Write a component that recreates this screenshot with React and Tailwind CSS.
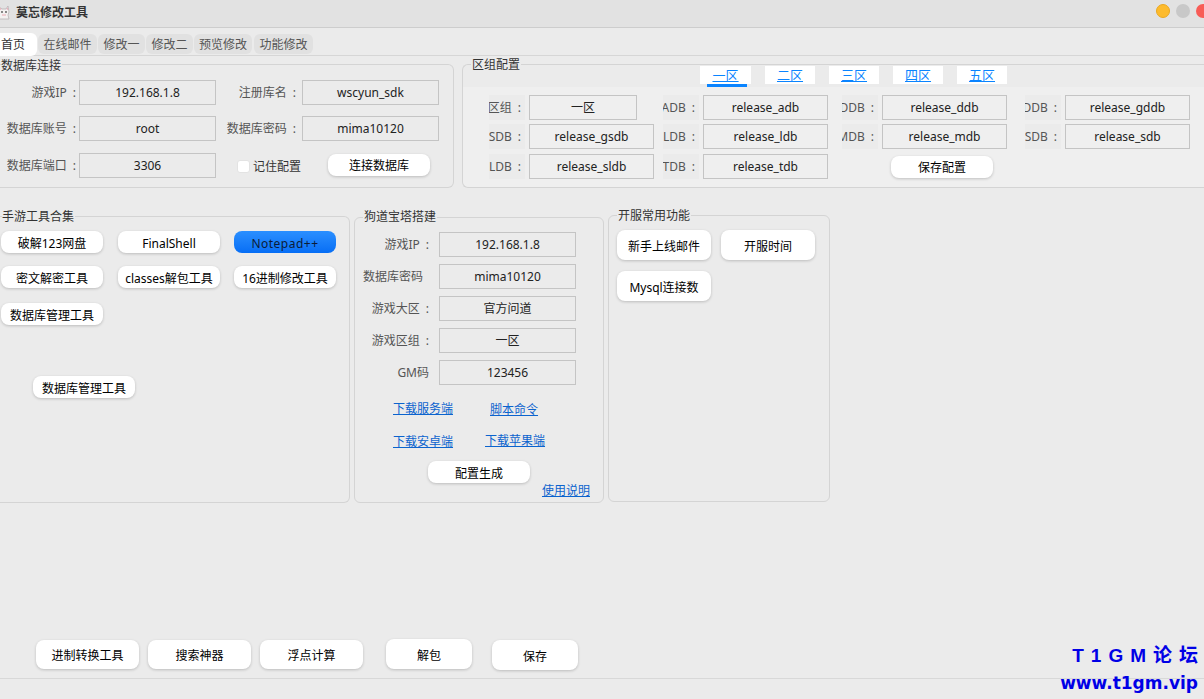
import React from 'react';

const Field = ({ label, value, labelW = 'w-[76px] mr-[3px]', inputW = 'w-[137px]', labelCls = '' }) => (
  <div className="flex items-center">
    <div className={`${labelW} ${labelCls} shrink-0 flex justify-end overflow-hidden whitespace-pre text-[#555]`}>{label}</div>
    <div className={`${inputW} h-[25px] shrink-0 flex items-center justify-center border border-[#c4c4c4] text-[#222]`}>{value}</div>
  </div>
);

const Btn = ({ children, cls = 'w-[102px] h-[22px]', pad = 'pt-[4px]' }) => (
  <button className={`${cls} ${pad} shrink-0 flex items-center justify-center rounded-lg bg-white text-black shadow-[0_1px_3px_rgba(0,0,0,0.2)]`}>
    {children}
  </button>
);

const Title = ({ children, cls }) => (
  <div className={`absolute bg-[#ebebeb] text-[#333] leading-[14px] whitespace-nowrap ${cls}`}>{children}</div>
);

const Link = ({ children, cls = '' }) => (
  <a className={`text-[#0b63ce] underline whitespace-nowrap ${cls}`}>{children}</a>
);

const CatIcon = () => (
  <svg width="11" height="16" viewBox="0 0 11 16" className="shrink-0">
    <path d="M0 3 L3 5 L7 5 L9 2 L10 8 L9 11 L10 15 L0 15 Z" fill="#f4f1f1" stroke="#b9b3b5" strokeWidth="0.8" />
    <path d="M1 4 L2.5 5 L1 6 Z M8.7 3.5 L9.3 6 L7.5 5.2 Z" fill="#e9a9b4" />
    <circle cx="3" cy="8" r="0.9" fill="#555" />
    <circle cx="7" cy="8" r="0.9" fill="#555" />
    <rect x="3" y="10.5" width="4" height="1" fill="#e9a9b4" />
  </svg>
);

const App = () => {
  const tabs = [
    ['在线邮件', 'w-[59px] ml-px'],
    ['修改一', 'w-[47px] ml-px'],
    ['修改二', 'w-[47px] ml-px'],
    ['预览修改', 'w-[58px] ml-px'],
    ['功能修改', 'w-[59px] ml-[2px]'],
  ];
  const zones = [
    ['一区', 'w-[51px]'],
    ['二区', 'w-[50px] ml-[14px]'],
    ['三区', 'w-[50px] ml-[14px]'],
    ['四区', 'w-[50px] ml-[14px]'],
    ['五区', 'w-[50px] ml-[14px]'],
  ];
  const dbRows = [
    [['区组\u2002:', '一区', 'w-[108px]'], ['ADB\u2002:', 'release_adb'], ['DDB\u2002:', 'release_ddb'], ['DDB\u2002:', 'release_gddb']],
    [['SDB\u2002:', 'release_gsdb'], ['LDB\u2002:', 'release_ldb'], ['MDB\u2002:', 'release_mdb'], ['SDB\u2002:', 'release_sdb']],
    [['SLDB\u2002:', 'release_sldb'], ['TDB\u2002:', 'release_tdb']],
  ];
  const colW = ['w-[174px]', 'w-[179px]', 'w-[183px]', 'w-[182px]'];

  return (
    <div className="relative w-[1204px] h-[699px] overflow-hidden flex flex-col bg-[#ebebeb] text-[12px] font-['Noto_Sans','Noto_Sans_CJK_SC',sans-serif]">
      {/* title bar */}
      <div className="h-[28px] shrink-0 flex items-center bg-[#e2e2e2] border-b border-[#cdcdcd]">
        <div className="-ml-px -mt-[4px]"><CatIcon /></div>
        <span className="ml-[6px] -mt-[2px] font-bold text-[#333]">莫忘修改工具</span>
        <div className="ml-auto flex items-center gap-[6px] -mr-[6px] -mt-[5px]">
          <div className="w-[14px] h-[14px] rounded-full bg-[#fdbb2d] border border-[#eaa820]" />
          <div className="w-[14px] h-[14px] rounded-full bg-[#c8c8c8]" />
          <div className="w-[14px] h-[14px] rounded-full bg-[#f85c56]" />
        </div>
      </div>

      {/* tabs */}
      <div className="h-[28px] shrink-0 flex items-end border-b border-[#d6d6d6] text-[#555]">
        <div className="w-[37px] h-[23px] -mb-px pl-px pt-px flex items-center bg-white rounded-tr-md rounded-br-md text-[#333]">首页</div>
        {tabs.map(([name, cls]) => (
          <div key={name} className={`${cls} h-[20px] mb-px pt-px flex items-center justify-center rounded-md bg-[#e1e1e1]`}>{name}</div>
        ))}
      </div>

      {/* top groups */}
      <div className="mt-[8px] flex shrink-0">
        <div className="relative w-[454px] h-[124px] shrink-0 border border-l-0 border-[#d4d4d4] rounded-r-md pt-[15px]">
          <Title cls="left-px -top-[6px] pr-px">数据库连接</Title>
          <div className="flex">
            <Field label={'游戏IP\u2002:'} value="192.168.1.8" />
            <Field label={'注册库名\u2002:'} value="wscyun_sdk" labelW="w-[80px] mr-[6px]" />
          </div>
          <div className="flex mt-[11px]">
            <Field label={'数据库账号\u2002:'} value="root" />
            <Field label={'数据库密码\u2002:'} value="mima10120" labelW="w-[80px] mr-[6px]" />
          </div>
          <div className="flex items-center mt-[12px]">
            <Field label={'数据库端口\u2002:'} value="3306" />
            <div className="ml-[21px] mt-[2px] w-[13px] h-[13px] rounded-[3px] bg-white border border-[#e3e3e3]" />
            <span className="ml-[3px] mt-[2px] text-[#333]">记住配置</span>
            <div className="ml-[27px] -mt-[2px]"><Btn pad="pt-[2px]">连接数据库</Btn></div>
          </div>
        </div>

        <div className="relative ml-[8px] w-[760px] h-[124px] shrink-0 flex flex-col border border-r-0 border-[#d4d4d4] rounded-l-md">
          <Title cls="left-[8px] -top-[7px] px-px">区组配置</Title>
          <div className="h-[22px] shrink-0 flex pl-[237px] pt-px">
            {zones.map(([name, cls], i) => (
              <div key={name} className={`${cls} relative h-[18px] pt-px flex items-center justify-center bg-white text-[13px] text-[#0a84ff] underline`}>
                {name}
                {i === 0 && <div className="absolute left-[7px] top-[18px] w-[40px] h-[3px] bg-[#0a84ff]" />}
              </div>
            ))}
          </div>
          <div className="flex-1 bg-[#efefef] rounded-b-md pl-[26px] pt-[8px]">
            {dbRows.map((row, r) => (
              <div key={r} className={`flex ${r === 1 ? 'mt-[4px]' : r === 2 ? 'mt-[5px]' : ''}`}>
                {row.map(([label, value, w], c) => (
                  <div key={value} className={colW[c]}>
                    <Field label={label} value={value} labelW="w-[36px] mr-[4px]" labelCls="h-[25px] items-center pr-[4px] bg-[#ebebeb]" inputW={w || 'w-[125px]'} />
                  </div>
                ))}
                {r === 2 && <div className="ml-[49px] mt-[2px]"><Btn pad="pt-[2px]">保存配置</Btn></div>}
              </div>
            ))}
          </div>
        </div>
      </div>

      {/* middle groups */}
      <div className="mt-[27px] flex items-start shrink-0">
        <div className="relative w-[350px] h-[287px] mt-px shrink-0 border border-l-0 border-[#d4d4d4] rounded-r-md pt-[14px] pl-px">
          <Title cls="left-[2px] -top-[7px] pr-px">手游工具合集</Title>
          <div className="grid grid-cols-[117px_116px_102px]">
            <Btn>破解123网盘</Btn>
            <Btn>FinalShell</Btn>
            <button className="w-[102px] h-[22px] pt-[4px] flex items-center justify-center rounded-lg bg-gradient-to-b from-[#2a8fff] to-[#066ef5] text-[#0b1c38] tracking-[0.5px]">Notepad++</button>
          </div>
          <div className="mt-[13px] grid grid-cols-[117px_116px_102px]">
            <Btn>密文解密工具</Btn>
            <Btn>classes解包工具</Btn>
            <Btn>16进制修改工具</Btn>
          </div>
          <div className="mt-[15px]"><Btn>数据库管理工具</Btn></div>
          <div className="mt-[51px] ml-[32px]"><Btn>数据库管理工具</Btn></div>
        </div>

        <div className="relative ml-[4px] w-[250px] h-[286px] mt-[2px] shrink-0 border border-[#d4d4d4] rounded-md pt-[14px]">
          <Title cls="left-[8px] -top-[8px] px-px">狗道宝塔搭建</Title>
          <div className="flex flex-col gap-[7px]">
            <Field label={'游戏IP\u2002:'} value="192.168.1.8" labelW="w-[74px] mr-[10px]" />
            <Field label="数据库密码" value="mima10120" labelW="w-[74px] mr-[10px]" labelCls="pr-[6px]" />
            <Field label={'游戏大区\u2002:'} value="官方问道" labelW="w-[74px] mr-[10px]" />
            <Field label={'游戏区组\u2002:'} value="一区" labelW="w-[74px] mr-[10px]" />
            <Field label="GM码" value="123456" labelW="w-[74px] mr-[10px]" />
          </div>
          <div className="mt-[14px] ml-[38px] flex items-center">
            <Link>下载服务端</Link>
            <Link cls="ml-[37px] mt-[2px]">脚本命令</Link>
          </div>
          <div className="mt-[14px] ml-[38px] flex items-center">
            <Link>下载安卓端</Link>
            <Link cls="ml-[32px] -mt-[2px]">下载苹果端</Link>
          </div>
          <div className="mt-[10px] ml-[73px]"><Btn>配置生成</Btn></div>
          <div className="mt-[-1px] pr-[13px] flex justify-end"><Link>使用说明</Link></div>
        </div>

        <div className="relative ml-[4px] w-[222px] h-[287px] shrink-0 border border-[#d4d4d4] rounded-md pt-[14px] pl-[8px]">
          <Title cls="left-[8px] -top-[7px] px-px">开服常用功能</Title>
          <div className="flex gap-[10px]">
            <Btn cls="w-[94px] h-[30px]">新手上线邮件</Btn>
            <Btn cls="w-[94px] h-[30px]">开服时间</Btn>
          </div>
          <div className="mt-[11px]"><Btn cls="w-[94px] h-[30px]">Mysql连接数</Btn></div>
        </div>
      </div>

      {/* bottom buttons */}
      <div className="mt-auto h-[39px] shrink-0 flex items-start pl-[36px] border-b border-[#d8d8d8]">
        <Btn cls="w-[103px] h-[29px]" pad="pt-[2px]">进制转换工具</Btn>
        <div className="ml-[9px]"><Btn cls="w-[103px] h-[29px]" pad="pt-[2px]">搜索神器</Btn></div>
        <div className="ml-[9px]"><Btn cls="w-[103px] h-[29px]" pad="pt-[2px]">浮点计算</Btn></div>
        <div className="ml-[23px] -mt-px"><Btn cls="w-[86px] h-[30px]">解包</Btn></div>
        <div className="ml-[20px]"><Btn cls="w-[86px] h-[30px]">保存</Btn></div>
      </div>
      <div className="h-[20px] shrink-0" />

      {/* watermark over the status line */}
      <div className="absolute right-[6px] bottom-[7px] flex flex-col items-end text-[#0000e6] font-bold leading-none">
        <div className="text-[19px] tracking-[7px] -mr-[7px] font-['Liberation_Sans','Noto_Sans_CJK_SC',sans-serif]">T1GM论坛</div>
        <div className="mt-[10px] text-[17px] font-['DejaVu_Sans',sans-serif]">www.t1gm.vip</div>
      </div>
    </div>
  );
};

export default App;
